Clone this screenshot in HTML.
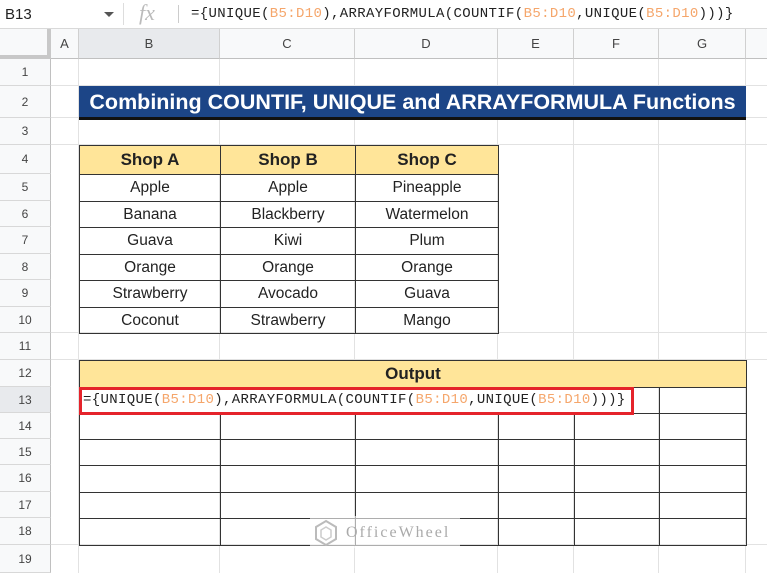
<!DOCTYPE html>
<html><head><meta charset="utf-8"><style>
*{margin:0;padding:0;box-sizing:border-box}
body{width:767px;height:573px;overflow:hidden;background:#fff;font-family:"Liberation Sans",Arial,sans-serif;position:relative}
.a{position:absolute}
.fb{left:0;top:0;width:767px;height:29px;background:#fff;border-bottom:1px solid #d9d9d9}
.mono{font-family:"Liberation Mono",monospace;font-size:14px;letter-spacing:0.35px;color:#222;white-space:nowrap}
.r{color:#f5a66b}
.ch{top:29px;height:30px;background:#f8f9fa;border-right:1px solid #d0d0d0;border-bottom:1px solid #c0c0c0;color:#444;font-size:13px;text-align:center;line-height:30px}
.rh{left:0;width:51px;background:#f8f9fa;border-right:1px solid #c0c0c0;border-bottom:1px solid #d8d8d8;color:#444;font-size:12px;text-align:center}
.vl{top:59px;height:514px;width:1px;background:#e2e2e2}
.hl{left:51px;width:716px;height:1px;background:#e2e2e2}
table{border-collapse:collapse;position:absolute}
td{border:1.5px solid #333;text-align:center;font-size:15.5px;color:#222;padding:0}
</style></head><body>
<div class="a fb"></div>
<div class="a" style="left:5px;top:6px;font-size:15px;color:#222">B13</div>
<div class="a" style="left:104px;top:12px;width:0;height:0;border-left:5px solid transparent;border-right:5px solid transparent;border-top:5px solid #555"></div>
<div class="a" style="left:123px;top:3px;width:1px;height:22px;background:#ddd"></div>
<div class="a" style="left:139px;top:0px;font-family:'Liberation Serif',serif;font-style:italic;font-size:22px;color:#bbb">fx</div>
<div class="a" style="left:178px;top:5px;width:1px;height:18px;background:#ccc"></div>
<div class="a mono" style="left:191px;top:6px">={UNIQUE(<span class="r">B5:D10</span>),ARRAYFORMULA(COUNTIF(<span class="r">B5:D10</span>,UNIQUE(<span class="r">B5:D10</span>)))}</div>

<div class="a" style="left:0;top:29px;width:51px;height:30px;background:#f8f9fa;border-right:4px solid #c8c8c8;border-bottom:4px solid #c8c8c8"></div>
<div class="a ch" style="left:51px;width:28px">A</div>
<div class="a ch" style="left:79px;width:141px;background:#e8eaed">B</div>
<div class="a ch" style="left:220px;width:135px">C</div>
<div class="a ch" style="left:355px;width:143px">D</div>
<div class="a ch" style="left:498px;width:76px">E</div>
<div class="a ch" style="left:574px;width:85px">F</div>
<div class="a ch" style="left:659px;width:87px">G</div>
<div class="a ch" style="left:746px;width:21px;border-right:none"></div>

<div class="a vl" style="left:78px"></div><div class="a vl" style="left:219px"></div><div class="a vl" style="left:354px"></div><div class="a vl" style="left:497px"></div><div class="a vl" style="left:573px"></div><div class="a vl" style="left:658px"></div><div class="a vl" style="left:745px"></div>

<div class="a rh" style="top:59px;height:27px;line-height:27px">1</div>
<div class="a rh" style="top:86px;height:32px;line-height:32px">2</div>
<div class="a rh" style="top:118px;height:27px;line-height:27px">3</div>
<div class="a rh" style="top:145px;height:29px;line-height:29px">4</div>
<div class="a rh" style="top:174px;height:27px;line-height:27px">5</div>
<div class="a rh" style="top:201px;height:26px;line-height:26px">6</div>
<div class="a rh" style="top:227px;height:27px;line-height:27px">7</div>
<div class="a rh" style="top:254px;height:26px;line-height:26px">8</div>
<div class="a rh" style="top:280px;height:27px;line-height:27px">9</div>
<div class="a rh" style="top:307px;height:26px;line-height:26px">10</div>
<div class="a rh" style="top:333px;height:27px;line-height:27px">11</div>
<div class="a rh" style="top:360px;height:27px;line-height:27px">12</div>
<div class="a rh" style="top:387px;height:26px;line-height:26px;background:#e8eaed">13</div>
<div class="a rh" style="top:413px;height:26px;line-height:26px">14</div>
<div class="a rh" style="top:439px;height:26px;line-height:26px">15</div>
<div class="a rh" style="top:465px;height:27px;line-height:27px">16</div>
<div class="a rh" style="top:492px;height:26px;line-height:26px">17</div>
<div class="a rh" style="top:518px;height:27px;line-height:27px">18</div>
<div class="a rh" style="top:545px;height:28px;line-height:28px">19</div>

<div class="a hl" style="top:85px"></div><div class="a hl" style="top:117px"></div><div class="a hl" style="top:144px"></div><div class="a hl" style="top:332px"></div><div class="a hl" style="top:359px"></div><div class="a hl" style="top:544px"></div>

<div class="a" style="left:79px;top:86px;width:667px;height:34px;background:#1c4587;border-bottom:3px solid #111;color:#fff;font-weight:bold;font-size:21.5px;text-align:center;line-height:33px;white-space:nowrap">Combining COUNTIF, UNIQUE and ARRAYFORMULA Functions</div>

<table style="left:79px;top:145px;width:420px">
<tr style="height:29px;background:#ffe599"><td style="width:141px;font-weight:bold;font-size:17px">Shop A</td><td style="width:135px;font-weight:bold;font-size:17px">Shop B</td><td style="font-weight:bold;font-size:17px">Shop C</td></tr>
<tr style="height:27px"><td>Apple</td><td>Apple</td><td>Pineapple</td></tr>
<tr style="height:26px"><td>Banana</td><td>Blackberry</td><td>Watermelon</td></tr>
<tr style="height:27px"><td>Guava</td><td>Kiwi</td><td>Plum</td></tr>
<tr style="height:26px"><td>Orange</td><td>Orange</td><td>Orange</td></tr>
<tr style="height:27px"><td>Strawberry</td><td>Avocado</td><td>Guava</td></tr>
<tr style="height:26px"><td>Coconut</td><td>Strawberry</td><td>Mango</td></tr>
</table>

<table style="left:79px;top:360px;width:668px">
<tr style="height:27px;background:#ffe599"><td colspan="6" style="font-weight:bold;font-size:17px">Output</td></tr>
<tr style="height:26px"><td style="width:141px"></td><td style="width:135px"></td><td style="width:143px"></td><td style="width:76px"></td><td style="width:85px"></td><td></td></tr>
<tr style="height:26px"><td></td><td></td><td></td><td></td><td></td><td></td></tr>
<tr style="height:26px"><td></td><td></td><td></td><td></td><td></td><td></td></tr>
<tr style="height:27px"><td></td><td></td><td></td><td></td><td></td><td></td></tr>
<tr style="height:26px"><td></td><td></td><td></td><td></td><td></td><td></td></tr>
<tr style="height:27px"><td></td><td></td><td></td><td></td><td></td><td></td></tr>
</table>

<div class="a" style="left:79px;top:387px;width:555px;height:28px;background:#fff;border:3px solid #e5232b"></div>
<div class="a mono" style="left:83px;top:392px">={UNIQUE(<span class="r">B5:D10</span>),ARRAYFORMULA(COUNTIF(<span class="r">B5:D10</span>,UNIQUE(<span class="r">B5:D10</span>)))}</div>

<div class="a" style="left:310px;top:516px;width:150px;height:32px;background:rgba(255,255,255,0.6)"></div>
<svg class="a" style="left:313px;top:519px" width="26" height="30" viewBox="0 0 26 30"><path d="M13 2 L23 8 L23 20 L13 26 L3 20 L3 8 Z" fill="none" stroke="#bbb" stroke-width="2"/><path d="M13 8 L18 11 L18 18 L13 21 L8 18 L8 11 Z" fill="none" stroke="#ccc" stroke-width="1.5"/></svg>
<div class="a" style="left:346px;top:524px;font-family:'Liberation Serif',serif;font-size:16px;letter-spacing:2px;color:#aaa">OfficeWheel</div>
</body></html>
